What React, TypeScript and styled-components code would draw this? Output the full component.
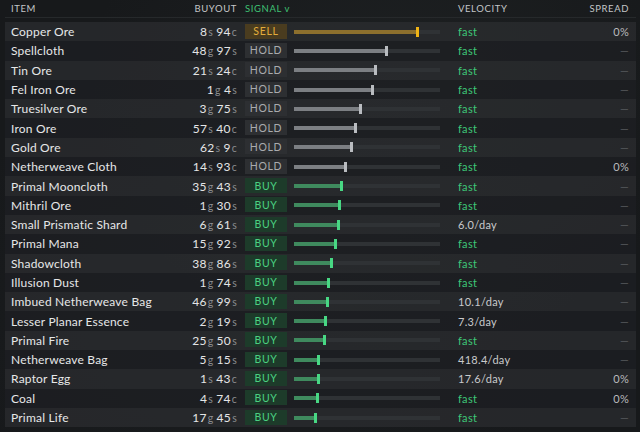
import React from "react";
import styled, { createGlobalStyle } from "styled-components";

const Global = createGlobalStyle`
  html, body { margin: 0; padding: 0; background: #17191b; }
  body { font-family: Lato, "Open Sans", sans-serif; }
`;

type Signal = "SELL" | "HOLD" | "BUY";
type Money = [string, string, string, string];
interface Item {
  name: string;
  price: Money;
  signal: Signal;
  marker: number;
  velocity: string;
  spread: string;
}

const items: Item[] = [
  { name: "Copper Ore", price: ["8", "s", "94", "c"], signal: "SELL", marker: 417, velocity: "fast", spread: "0%" },
  { name: "Spellcloth", price: ["48", "g", "97", "s"], signal: "HOLD", marker: 386, velocity: "fast", spread: "—" },
  { name: "Tin Ore", price: ["21", "s", "24", "c"], signal: "HOLD", marker: 375, velocity: "fast", spread: "—" },
  { name: "Fel Iron Ore", price: ["1", "g", "4", "s"], signal: "HOLD", marker: 372, velocity: "fast", spread: "—" },
  { name: "Truesilver Ore", price: ["3", "g", "75", "s"], signal: "HOLD", marker: 360, velocity: "fast", spread: "—" },
  { name: "Iron Ore", price: ["57", "s", "40", "c"], signal: "HOLD", marker: 355, velocity: "fast", spread: "—" },
  { name: "Gold Ore", price: ["62", "s", "9", "c"], signal: "HOLD", marker: 351, velocity: "fast", spread: "—" },
  { name: "Netherweave Cloth", price: ["14", "s", "93", "c"], signal: "HOLD", marker: 345, velocity: "fast", spread: "0%" },
  { name: "Primal Mooncloth", price: ["35", "g", "43", "s"], signal: "BUY", marker: 341, velocity: "fast", spread: "—" },
  { name: "Mithril Ore", price: ["1", "g", "30", "s"], signal: "BUY", marker: 339, velocity: "fast", spread: "—" },
  { name: "Small Prismatic Shard", price: ["6", "g", "61", "s"], signal: "BUY", marker: 338, velocity: "6.0/day", spread: "—" },
  { name: "Primal Mana", price: ["15", "g", "92", "s"], signal: "BUY", marker: 335, velocity: "fast", spread: "—" },
  { name: "Shadowcloth", price: ["38", "g", "86", "s"], signal: "BUY", marker: 331, velocity: "fast", spread: "—" },
  { name: "Illusion Dust", price: ["1", "g", "74", "s"], signal: "BUY", marker: 328, velocity: "fast", spread: "—" },
  { name: "Imbued Netherweave Bag", price: ["46", "g", "99", "s"], signal: "BUY", marker: 327, velocity: "10.1/day", spread: "—" },
  { name: "Lesser Planar Essence", price: ["2", "g", "19", "s"], signal: "BUY", marker: 325, velocity: "7.3/day", spread: "—" },
  { name: "Primal Fire", price: ["25", "g", "50", "s"], signal: "BUY", marker: 324, velocity: "fast", spread: "—" },
  { name: "Netherweave Bag", price: ["5", "g", "15", "s"], signal: "BUY", marker: 318, velocity: "418.4/day", spread: "—" },
  { name: "Raptor Egg", price: ["1", "s", "43", "c"], signal: "BUY", marker: 318, velocity: "17.6/day", spread: "0%" },
  { name: "Coal", price: ["4", "s", "74", "c"], signal: "BUY", marker: 317, velocity: "fast", spread: "0%" },
  { name: "Primal Life", price: ["17", "g", "45", "s"], signal: "BUY", marker: 315, velocity: "fast", spread: "—" },
];

const BAR_START = 294;

const palette: Record<Signal, { bg: string; fg: string; fill: string; mark: string }> = {
  SELL: { bg: "#4a3c1f", fg: "#e3ad3b", fill: "#8c6f2d", mark: "#f0b416" },
  HOLD: { bg: "#2d2f32", fg: "#a9abae", fill: "#7c7f83", mark: "#b9bcc0" },
  BUY: { bg: "#1d3b2a", fg: "#4bd182", fill: "#3f8a5e", mark: "#48d884" },
};

const Page = styled.div`
  width: 640px;
  height: 432px;
  overflow: hidden;
  background:
    radial-gradient(ellipse at 62% 20%, rgba(70, 80, 78, 0.12), transparent 55%),
    radial-gradient(ellipse at 40% 70%, rgba(60, 66, 70, 0.1), transparent 60%),
    #17191b;
  padding: 0 4px 0 5px;
  box-sizing: border-box;
`;

const cols = "168px 58px 8px 42px 7px 146px 18px 100px 71px";

const Header = styled.div`
  display: grid;
  grid-template-columns: ${cols};
  align-items: center;
  height: 17px;
  padding: 0 7px 0 6px;
  border-bottom: 1px solid #26292b;
  margin-bottom: 4px;
  font-size: 9.5px;
  letter-spacing: 0.6px;
  color: #c4c6c8;
`;

const HeadCell = styled.div<{ $align?: string; $col: number; $green?: boolean }>`
  grid-column: ${(p) => p.$col};
  text-align: ${(p) => p.$align || "left"};
  color: ${(p) => (p.$green ? "#3fc274" : "inherit")};
  white-space: nowrap;
`;

const Row = styled.div<{ $odd: boolean }>`
  display: grid;
  grid-template-columns: ${cols};
  align-items: center;
  height: 19.3px;
  padding: 0 7px 0 6px;
  background: ${(p) => (p.$odd ? "rgba(46, 49, 52, 0.62)" : "rgba(30, 32, 35, 0.7)")};
`;

const Name = styled.div`
  grid-column: 1;
  font-size: 12px;
  color: #e6e7e8;
  letter-spacing: 0.2px;
  white-space: nowrap;
`;

const Price = styled.div`
  grid-column: 2;
  text-align: right;
  white-space: nowrap;
  font-size: 12px;
  color: #e4e5e6;
  letter-spacing: 0.3px;
`;

const Unit = styled.span<{ $last?: boolean }>`
  font-size: 10.5px;
  color: #8a8c8f;
  margin-left: 1px;
  margin-right: ${(p) => (p.$last ? "0" : "3px")};
`;

const Badge = styled.div<{ $s: Signal }>`
  grid-column: 4;
  height: 15px;
  margin-top: -1px;
  display: flex;
  align-items: center;
  justify-content: center;
  background: ${(p) => palette[p.$s].bg};
  color: ${(p) => palette[p.$s].fg};
  font-size: 10.5px;
  letter-spacing: 0.7px;
`;

const Track = styled.div`
  grid-column: 6;
  position: relative;
  height: 4px;
  background: #2f3235;
`;

const Fill = styled.div<{ $s: Signal }>`
  position: absolute;
  left: 0;
  top: 0;
  bottom: 0;
  background: ${(p) => palette[p.$s].fill};
`;

const Marker = styled.div<{ $s: Signal }>`
  position: absolute;
  top: -3px;
  width: 3px;
  height: 10px;
  margin-left: -1.5px;
  background: ${(p) => palette[p.$s].mark};
`;

const Velocity = styled.div<{ $fast: boolean }>`
  grid-column: 8;
  font-size: 11px;
  letter-spacing: 0.3px;
  color: ${(p) => (p.$fast ? "#3ec778" : "#c9cacc")};
  white-space: nowrap;
`;

const Spread = styled.div<{ $dash: boolean }>`
  grid-column: 9;
  text-align: right;
  font-size: 11px;
  letter-spacing: 0.3px;
  color: ${(p) => (p.$dash ? "#55585b" : "#b9bbbd")};
`;

export default function App() {
  return (
    <>
      <Global />
      <Page>
        <Header>
          <HeadCell $col={1}>ITEM</HeadCell>
          <HeadCell $col={2} $align="right">BUYOUT</HeadCell>
          <HeadCell $col={4} $green>SIGNAL v</HeadCell>
          <HeadCell $col={8}>VELOCITY</HeadCell>
          <HeadCell $col={9} $align="right">SPREAD</HeadCell>
        </Header>
        {items.map((it, i) => {
          const w = it.marker - BAR_START;
          return (
            <Row key={it.name} $odd={i % 2 === 0}>
              <Name>{it.name}</Name>
              <Price>
                {it.price[0]}
                <Unit>{it.price[1]}</Unit>
                {it.price[2]}
                <Unit $last>{it.price[3]}</Unit>
              </Price>
              <Badge $s={it.signal}>{it.signal}</Badge>
              <Track>
                <Fill $s={it.signal} style={{ width: `${w}px` }} />
                <Marker $s={it.signal} style={{ left: `${w}px` }} />
              </Track>
              <Velocity $fast={it.velocity === "fast"}>{it.velocity}</Velocity>
              <Spread $dash={it.spread === "—"}>{it.spread}</Spread>
            </Row>
          );
        })}
      </Page>
    </>
  );
}
